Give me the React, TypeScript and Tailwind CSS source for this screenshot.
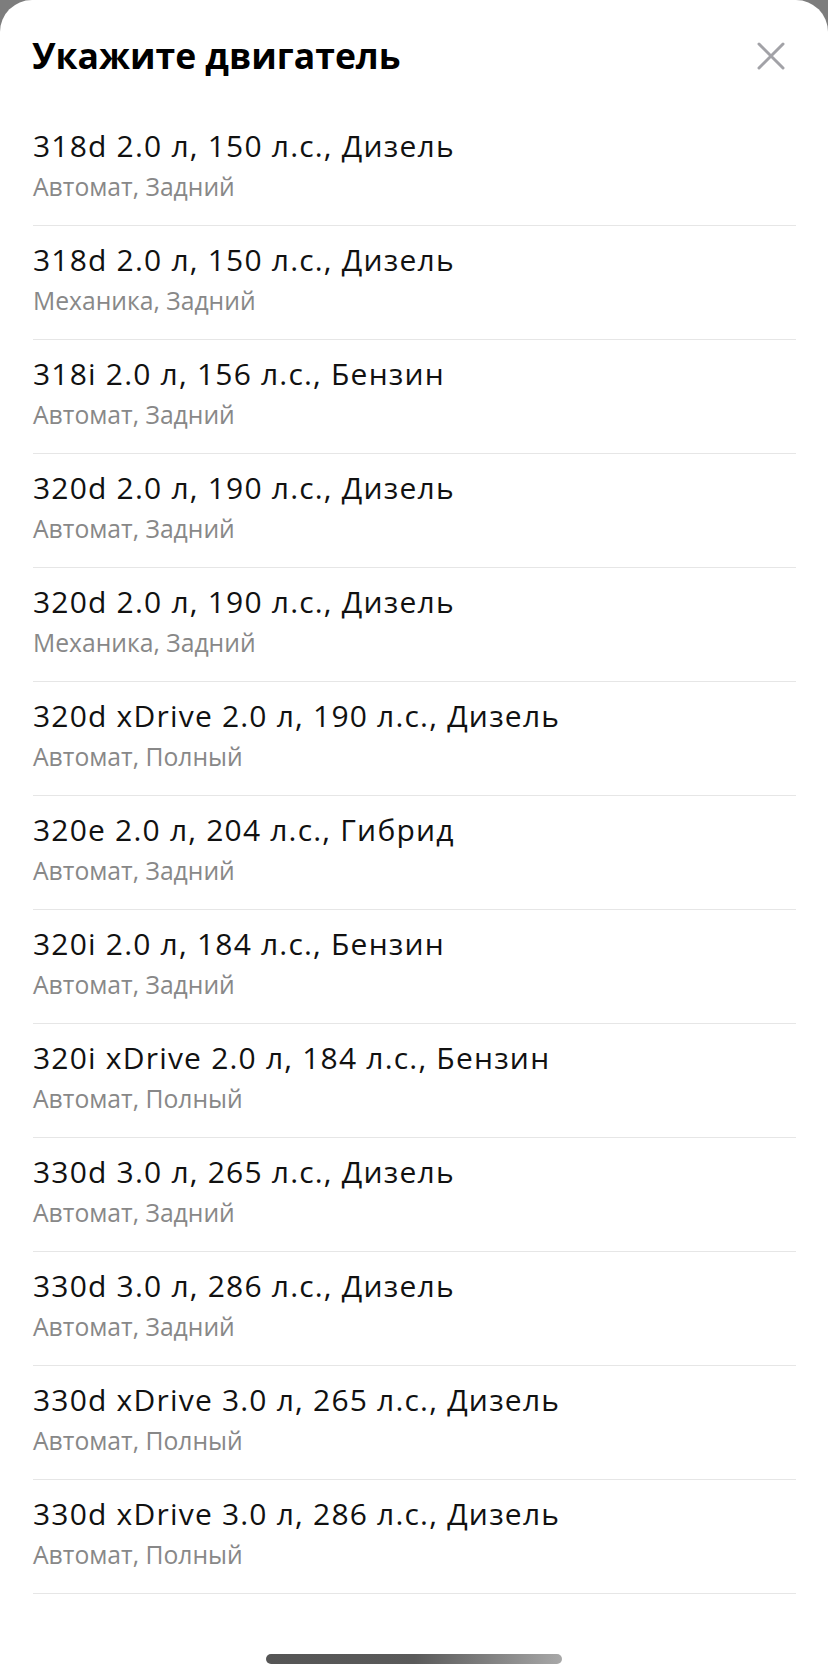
const engines = [
  { title: "318d 2.0 л, 150 л.с., Дизель", sub: "Автомат, Задний" },
  { title: "318d 2.0 л, 150 л.с., Дизель", sub: "Механика, Задний" },
  { title: "318i 2.0 л, 156 л.с., Бензин", sub: "Автомат, Задний" },
  { title: "320d 2.0 л, 190 л.с., Дизель", sub: "Автомат, Задний" },
  { title: "320d 2.0 л, 190 л.с., Дизель", sub: "Механика, Задний" },
  { title: "320d xDrive 2.0 л, 190 л.с., Дизель", sub: "Автомат, Полный" },
  { title: "320e 2.0 л, 204 л.с., Гибрид", sub: "Автомат, Задний" },
  { title: "320i 2.0 л, 184 л.с., Бензин", sub: "Автомат, Задний" },
  { title: "320i xDrive 2.0 л, 184 л.с., Бензин", sub: "Автомат, Полный" },
  { title: "330d 3.0 л, 265 л.с., Дизель", sub: "Автомат, Задний" },
  { title: "330d 3.0 л, 286 л.с., Дизель", sub: "Автомат, Задний" },
  { title: "330d xDrive 3.0 л, 265 л.с., Дизель", sub: "Автомат, Полный" },
  { title: "330d xDrive 3.0 л, 286 л.с., Дизель", sub: "Автомат, Полный" },
]

export default function App() {
  return (
    <div className="h-[1680px] w-[828px] bg-[#7d7d7d] font-['Open_Sans',sans-serif]">
      <div className="flex h-full flex-col rounded-t-[32px] bg-white">
        <div className="flex items-start justify-between pl-[32px] pr-[43px] pt-[33px] pb-[35px]">
          <h1 className="text-[35.5px] font-bold leading-[44px] text-black">Укажите двигатель</h1>
          <button className="mt-[9px] text-[#a2a2a7]" aria-label="Закрыть">
            <svg width="28" height="28" viewBox="0 0 28 28" fill="none" stroke="currentColor" strokeWidth="3" strokeLinecap="round">
              <path d="M2 2 L26 26 M26 2 L2 26" />
            </svg>
          </button>
        </div>

        <ul className="pl-[33px] pr-[32px]">
          {engines.map((item, index) => (
            <li key={index} className="border-b border-[#e6e6e6] pt-[16px] pb-[23px]">
              <div className="text-[30px] leading-[36px] tracking-[1.2px] text-[#111]">{item.title}</div>
              <div className="mt-[8px] text-[24.7px] leading-[30px] text-[#888]">{item.sub}</div>
            </li>
          ))}
        </ul>

        <div className="mt-auto mb-[16px] flex justify-center">
          <div className="h-[10px] w-[296px] rounded-full bg-gradient-to-r from-[#555] via-[#5a5a5a] to-[#a8a8a8]" />
        </div>
      </div>
    </div>
  )
}
